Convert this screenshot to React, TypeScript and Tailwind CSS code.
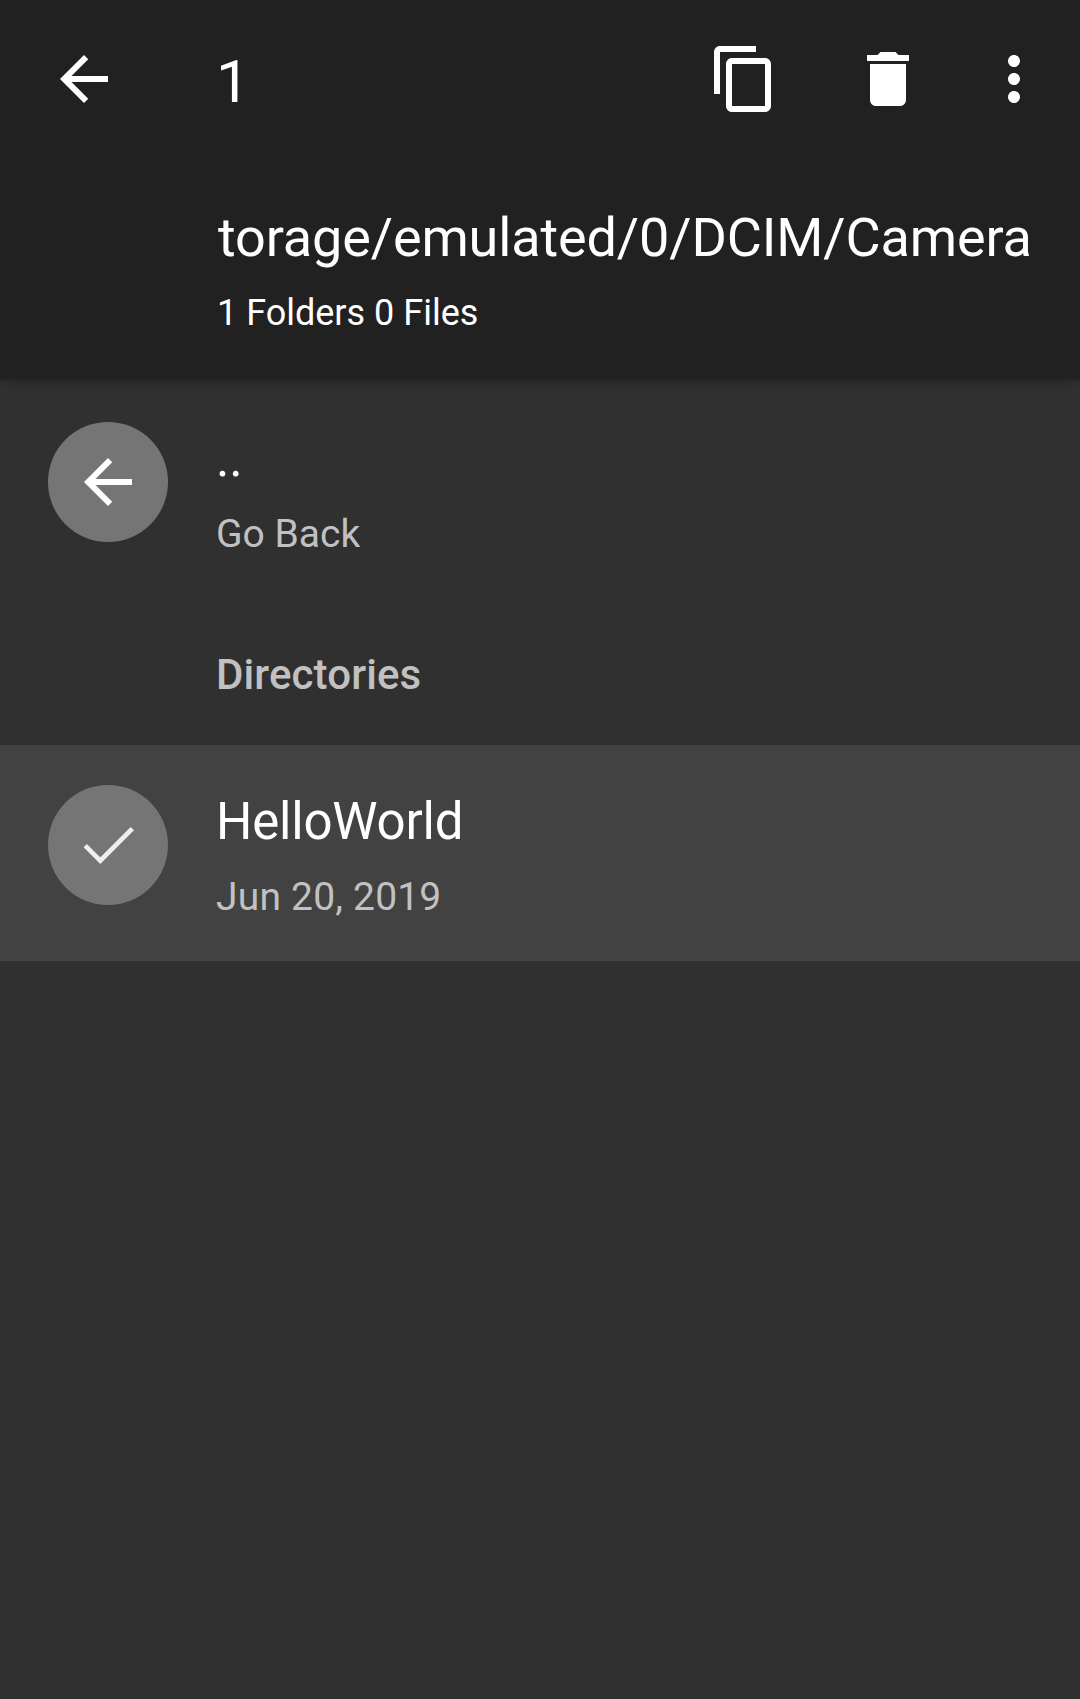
import type { ReactNode } from "react";

const paths = {
  back: "M20 11H7.83l5.59-5.59L12 4l-8 8 8 8 1.41-1.41L7.83 13H20v-2z",
  copy: "M16 1H4c-1.1 0-2 .9-2 2v14h2V3h12V1zm3 4H8c-1.1 0-2 .9-2 2v14c0 1.1.9 2 2 2h11c1.1 0 2-.9 2-2V7c0-1.1-.9-2-2-2zm0 16H8V7h11v14z",
  trash: "M6 19c0 1.1.9 2 2 2h8c1.1 0 2-.9 2-2V7H6v12zM19 4h-3.500l-1-1h-5l-1 1H5v2h14V4z",
  more: "M12 8c1.1 0 2-.9 2-2s-.9-2-2-2-2 .9-2 2 .9 2 2 2zm0 2c-1.1 0-2 .9-2 2s.9 2 2 2 2-.9 2-2-.9-2-2-2zm0 6c-1.1 0-2 .9-2 2s.9 2 2 2 2-.9 2-2-.9-2-2-2z",
};

function Icon({ name }: { name: keyof typeof paths }) {
  return (
    <svg viewBox="0 0 24 24" className="size-[72px] shrink-0 fill-white">
      <path d={paths[name]} />
    </svg>
  );
}

function Row({ icon, title, subtitle, selected = false }: { icon: ReactNode; title: string; subtitle: string; selected?: boolean }) {
  return (
    <li className={`flex h-[216px] items-start pl-12 ${selected ? "bg-[#424242]" : ""}`}>
      <div className="mt-10 flex size-[120px] shrink-0 items-center justify-center rounded-full bg-[#757575]">{icon}</div>
      <div className="pt-[47px] pl-12">
        <div className="text-[51px] leading-[60px] tracking-[-0.2px] text-white">{title}</div>
        <div className={`mt-[21px] text-[39px] leading-[48px] text-[#c1c1c1] ${selected ? "tracking-[0.2px]" : ""}`}>{subtitle}</div>
      </div>
    </li>
  );
}

export default function App() {
  return (
    <div className="flex h-[1699px] w-[1080px] flex-col overflow-hidden bg-[#303030] font-[Roboto,sans-serif] text-white">
      <header className="h-[379px] shrink-0 bg-[#212121] shadow-[0_2px_8px_rgba(0,0,0,0.3)]">
        <div className="flex h-[158px] items-center pr-[30px] pl-12">
          <button aria-label="Back"><Icon name="back" /></button>
          <span className="ml-24 pt-1.5 text-[60px] leading-[72px]">1</span>
          <div className="ml-auto flex items-center">
            <button aria-label="Copy"><Icon name="copy" /></button>
            <button aria-label="Delete" className="ml-[72px]"><Icon name="trash" /></button>
            <button aria-label="More options" className="ml-[54px]"><Icon name="more" /></button>
          </div>
        </div>
        <div className="pt-12 pl-[217px]">
          <div className="pl-px text-[54px] leading-[64px] tracking-[-0.13px] whitespace-nowrap">torage/emulated/0/DCIM/Camera</div>
          <div className="mt-[21px] text-[36px] leading-[44px]">1 Folders 0 Files</div>
        </div>
      </header>
      <ul className="pt-[3px]">
        <Row icon={<Icon name="back" />} title=".." subtitle="Go Back" />
        <li className="h-[147px] pt-[53px] pl-[216px] text-[42px] leading-[48px] font-medium tracking-[0.12px] text-[#c1c1c1]">Directories</li>
        <Row
          selected
          icon={
            <svg viewBox="0 0 72 72" className="size-[72px] fill-none stroke-[#eeeeee]" strokeWidth="4.7">
              <path d="M13.200 36.600 28.300 51.700 60.300 19.700" />
            </svg>
          }
          title="HelloWorld"
          subtitle="Jun 20, 2019"
        />
      </ul>
    </div>
  );
}
